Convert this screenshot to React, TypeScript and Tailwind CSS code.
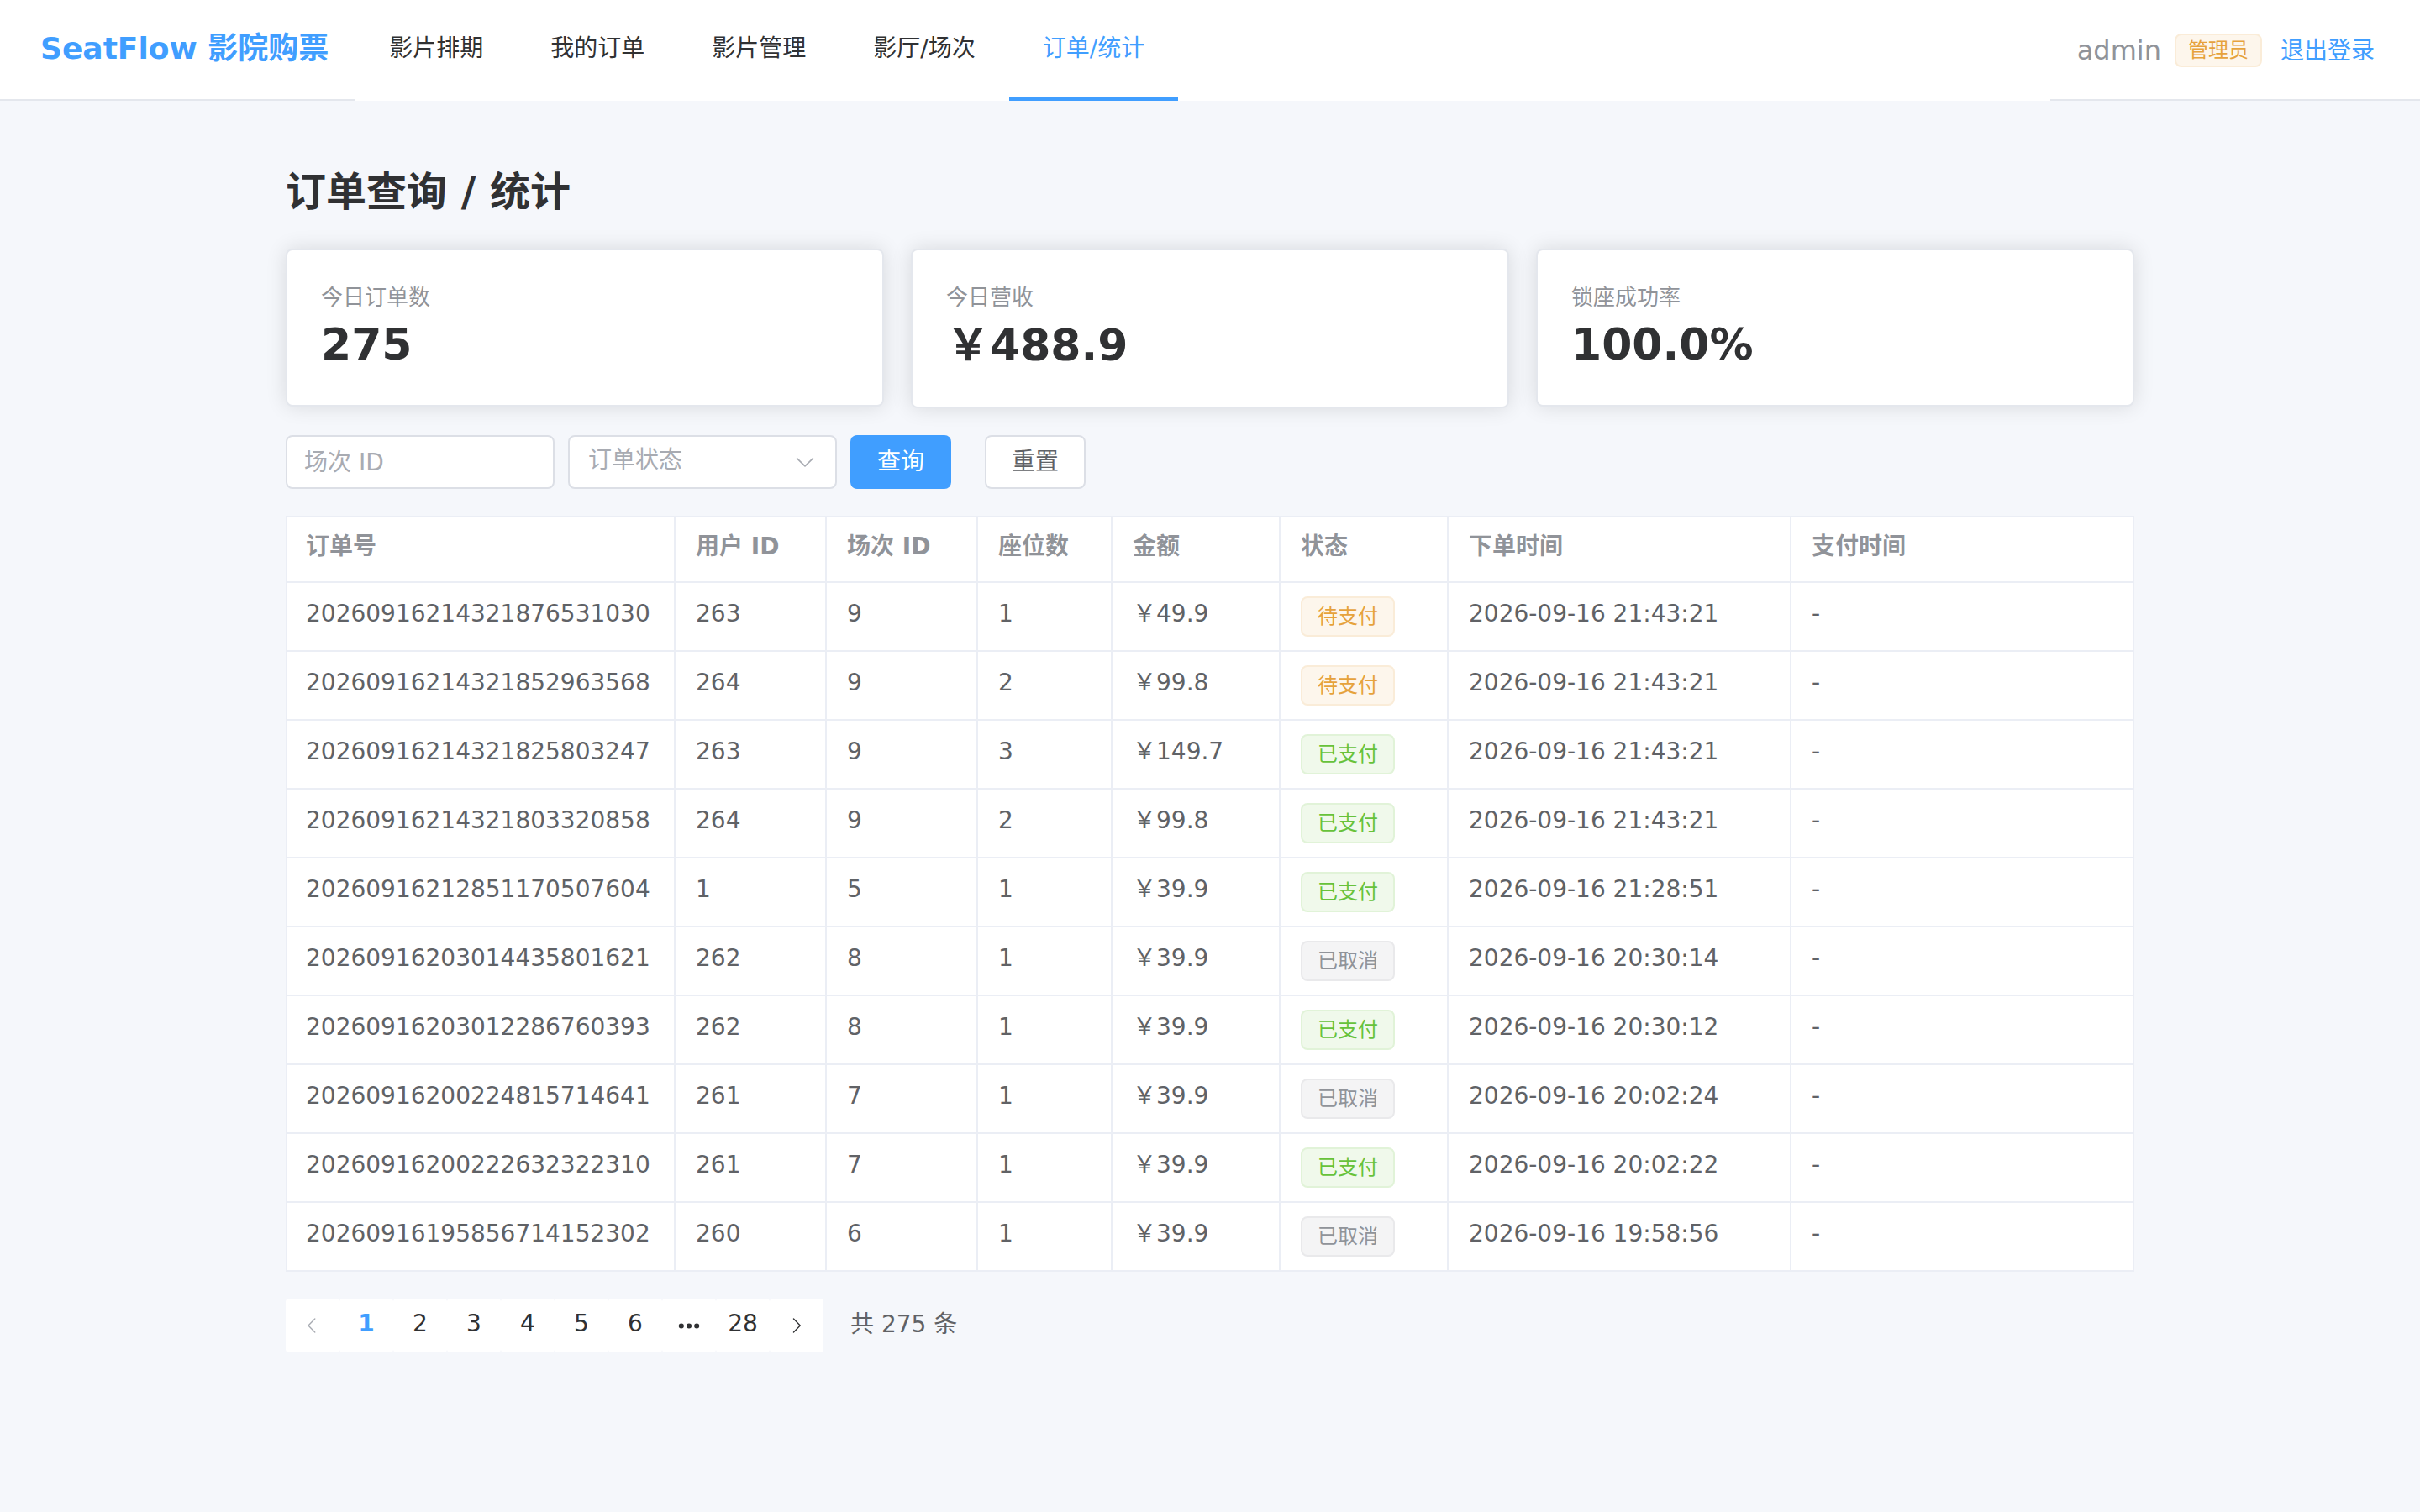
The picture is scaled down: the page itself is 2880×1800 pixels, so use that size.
import { useState } from "react";

type Status = "待支付" | "已支付" | "已取消";

interface Order {
  no: string;
  user: number;
  show: number;
  seats: number;
  amount: string;
  status: Status;
  created: string;
}

const orders: Order[] = [
  { no: "20260916214321876531030", user: 263, show: 9, seats: 1, amount: "49.9", status: "待支付", created: "2026-09-16 21:43:21" },
  { no: "20260916214321852963568", user: 264, show: 9, seats: 2, amount: "99.8", status: "待支付", created: "2026-09-16 21:43:21" },
  { no: "20260916214321825803247", user: 263, show: 9, seats: 3, amount: "149.7", status: "已支付", created: "2026-09-16 21:43:21" },
  { no: "20260916214321803320858", user: 264, show: 9, seats: 2, amount: "99.8", status: "已支付", created: "2026-09-16 21:43:21" },
  { no: "20260916212851170507604", user: 1, show: 5, seats: 1, amount: "39.9", status: "已支付", created: "2026-09-16 21:28:51" },
  { no: "20260916203014435801621", user: 262, show: 8, seats: 1, amount: "39.9", status: "已取消", created: "2026-09-16 20:30:14" },
  { no: "20260916203012286760393", user: 262, show: 8, seats: 1, amount: "39.9", status: "已支付", created: "2026-09-16 20:30:12" },
  { no: "20260916200224815714641", user: 261, show: 7, seats: 1, amount: "39.9", status: "已取消", created: "2026-09-16 20:02:24" },
  { no: "20260916200222632322310", user: 261, show: 7, seats: 1, amount: "39.9", status: "已支付", created: "2026-09-16 20:02:22" },
  { no: "20260916195856714152302", user: 260, show: 6, seats: 1, amount: "39.9", status: "已取消", created: "2026-09-16 19:58:56" },
];

const statusStyle: Record<Status, string> = {
  待支付: "border-[#faecd8] bg-[#fdf6ec] text-[#e6a23c]",
  已支付: "border-[#e1f3d8] bg-[#f0f9eb] text-[#67c23a]",
  已取消: "border-[#e9e9eb] bg-[#f4f4f5] text-[#909399]",
};

const navItems = ["影片排期", "我的订单", "影片管理", "影厅/场次", "订单/统计"];
const activeNav = "订单/统计";

const stats = [
  { label: "今日订单数", value: "275", leading: "leading-[64px]" },
  { label: "今日营收", value: "￥488.9", leading: "leading-[66px]" },
  { label: "锁座成功率", value: "100.0%", leading: "leading-[64px]" },
];

const columns = [
  { title: "订单号", width: "w-[464px]" },
  { title: "用户 ID", width: "w-[180px]" },
  { title: "场次 ID", width: "w-[180px]" },
  { title: "座位数", width: "w-[160px]" },
  { title: "金额", width: "w-[200px]" },
  { title: "状态", width: "w-[200px]" },
  { title: "下单时间", width: "" },
  { title: "支付时间", width: "" },
];

const ARROW_DOWN =
  "M831.872 340.864 512 652.672 192.128 340.864a30.592 30.592 0 0 0-42.752 0 29.12 29.12 0 0 0 0 41.6L489.664 714.24a32 32 0 0 0 44.672 0l340.288-331.712a29.12 29.12 0 0 0 0-41.728 30.592 30.592 0 0 0-42.752 0z";
const ARROW_LEFT =
  "M609.408 149.376 277.76 489.6a32 32 0 0 0 0 44.672l331.648 340.352a29.12 29.12 0 0 0 41.728 0 30.592 30.592 0 0 0 0-42.752L339.264 511.936l311.872-319.872a30.592 30.592 0 0 0 0-42.688 29.12 29.12 0 0 0-41.728 0z";
const ARROW_RIGHT =
  "M340.864 149.312a30.592 30.592 0 0 0 0 42.752L652.736 512 340.864 831.872a30.592 30.592 0 0 0 0 42.752 29.12 29.12 0 0 0 41.728 0L714.24 534.336a32 32 0 0 0 0-44.672L382.592 149.376a29.12 29.12 0 0 0-41.728 0z";
const MORE =
  "M176 416a112 112 0 1 1 0 224 112 112 0 0 1 0-224m336 0a112 112 0 1 1 0 224 112 112 0 0 1 0-224m336 0a112 112 0 1 1 0 224 112 112 0 0 1 0-224";

function Icon({ path, className }: { path: string; className: string }) {
  return (
    <svg viewBox="0 0 1024 1024" fill="currentColor" aria-hidden="true" className={className}>
      <path d={path} />
    </svg>
  );
}

function Header() {
  return (
    <header className="flex h-[120px] bg-white">
      <div className="flex items-center border-b-2 border-[#e4e7ed] pr-8 pb-0.5 pl-12 text-4xl font-bold whitespace-nowrap text-[#409eff]">
        SeatFlow 影院购票
      </div>
      <nav className="flex flex-1">
        {navItems.map((item) => (
          <a
            key={item}
            href="#"
            aria-current={item === activeNav ? "page" : undefined}
            className={
              item === activeNav
                ? "flex items-center border-b-4 border-[#409eff] px-10 whitespace-nowrap text-[#409eff]"
                : "flex items-center border-b-4 border-transparent px-10 whitespace-nowrap text-[#303133]"
            }
          >
            {item}
          </a>
        ))}
      </nav>
      <div className="flex items-center gap-4 border-b-2 border-[#e4e7ed] pt-0.5 pr-12 pl-8 whitespace-nowrap">
        <span className="text-[32px] text-[#909399]">admin</span>
        <span className="flex h-10 items-center rounded-lg border-2 border-[#faecd8] bg-[#fdf6ec] px-3.5 text-2xl text-[#e6a23c]">
          管理员
        </span>
        <button type="button" className="px-1.5 pt-0.5 text-[#409eff]">
          退出登录
        </button>
      </div>
    </header>
  );
}

function StatCard({ label, value, leading }: { label: string; value: string; leading: string }) {
  return (
    <section className="rounded-lg border-2 border-[#e4e7ed] bg-white p-10 shadow-[0_0_24px_rgba(0,0,0,0.12)]">
      <div className="text-[26px] leading-8 text-[#909399]">{label}</div>
      <div className={`mt-2 text-[52px] font-bold text-[#303133] ${leading}`}>{value}</div>
    </section>
  );
}

function Filters() {
  return (
    <form className="mt-8 flex" onSubmit={(e) => e.preventDefault()}>
      <input
        type="text"
        aria-label="场次 ID"
        placeholder="场次 ID"
        className="h-16 w-80 rounded-lg border-2 border-[#dcdfe6] bg-white px-5 text-[#606266] placeholder:text-[#a8abb2]"
      />
      <div className="relative ml-4 w-80">
        <select
          aria-label="订单状态"
          defaultValue=""
          className="h-16 w-full appearance-none rounded-lg border-2 border-[#dcdfe6] bg-white px-[22px] pb-1 text-[#a8abb2]"
        >
          <option value="">订单状态</option>
          <option>待支付</option>
          <option>已支付</option>
          <option>已取消</option>
        </select>
        <Icon path={ARROW_DOWN} className="pointer-events-none absolute top-[18px] right-6 size-7 text-[#a8abb2]" />
      </div>
      <button type="submit" className="ml-4 h-16 rounded-lg bg-[#409eff] px-8 text-white">
        查询
      </button>
      <button type="reset" className="ml-10 h-16 rounded-lg border-2 border-[#dcdfe6] bg-white px-[30px] text-[#606266]">
        重置
      </button>
    </form>
  );
}

function OrdersTable() {
  const cell = "border-r-2 border-b-2 border-[#ebeef5] px-6 first:border-l-2 first:pl-[22px]";
  return (
    <table className="mt-8 w-full table-fixed border-separate border-spacing-0 bg-white text-left text-[#606266]">
      <colgroup>
        {columns.map((c) => (
          <col key={c.title} className={c.width} />
        ))}
      </colgroup>
      <thead>
        <tr className="h-20">
          {columns.map((c) => (
            <th key={c.title} scope="col" className={`${cell} border-t-2 pb-1.5 font-bold text-[#909399]`}>
              {c.title}
            </th>
          ))}
        </tr>
      </thead>
      <tbody>
        {orders.map((o) => (
          <tr key={o.no} className="h-[82px]">
            <td className={`${cell} pb-1.5`}>{o.no}</td>
            <td className={`${cell} pb-1.5`}>{o.user}</td>
            <td className={`${cell} pb-1.5`}>{o.show}</td>
            <td className={`${cell} pb-1.5`}>{o.seats}</td>
            <td className={`${cell} pb-1.5`}>￥{o.amount}</td>
            <td className={cell}>
              <span className={`flex h-12 w-fit items-center rounded-lg border-2 px-[18px] text-2xl ${statusStyle[o.status]}`}>
                {o.status}
              </span>
            </td>
            <td className={`${cell} pb-1.5`}>{o.created}</td>
            <td className={`${cell} pb-1.5`}>-</td>
          </tr>
        ))}
      </tbody>
    </table>
  );
}

function Pagination() {
  const [page, setPage] = useState(1);
  const base = "flex h-16 w-16 items-center justify-center rounded-sm bg-white";
  const pageButton = (n: number) => (
    <button
      key={n}
      type="button"
      onClick={() => setPage(n)}
      className={n === page ? `${base} pb-1 font-bold text-[#409eff]` : `${base} pb-1 text-[#303133]`}
    >
      {n}
    </button>
  );
  return (
    <div className="mt-8 flex items-center">
      <nav aria-label="分页" className="flex">
        <button type="button" aria-label="上一页" disabled={page === 1} className={`${base} text-[#303133] disabled:text-[#a8abb2]`}>
          <Icon path={ARROW_LEFT} className="size-6" />
        </button>
        {[1, 2, 3, 4, 5, 6].map(pageButton)}
        <button type="button" aria-label="更多页" className={`${base} text-[#303133]`}>
          <Icon path={MORE} className="size-7" />
        </button>
        {pageButton(28)}
        <button type="button" aria-label="下一页" className={`${base} text-[#303133]`}>
          <Icon path={ARROW_RIGHT} className="size-6" />
        </button>
      </nav>
      <span className="ml-8 pb-0.5 text-[#606266]">共 275 条</span>
    </div>
  );
}

export default function App() {
  return (
    <div className="min-h-screen bg-[#f5f7fb] font-['DejaVu_Sans','Noto_Sans_CJK_SC',sans-serif] text-[28px] leading-9">
      <Header />
      <main className="mx-auto w-full max-w-[2200px] pt-[76px]">
        <h1 className="mb-9 text-5xl leading-[64px] font-bold text-[#303133]">订单查询 / 统计</h1>
        <div className="grid grid-cols-3 items-start gap-8">
          {stats.map((s) => (
            <StatCard key={s.label} label={s.label} value={s.value} leading={s.leading} />
          ))}
        </div>
        <Filters />
        <OrdersTable />
        <Pagination />
      </main>
    </div>
  );
}
